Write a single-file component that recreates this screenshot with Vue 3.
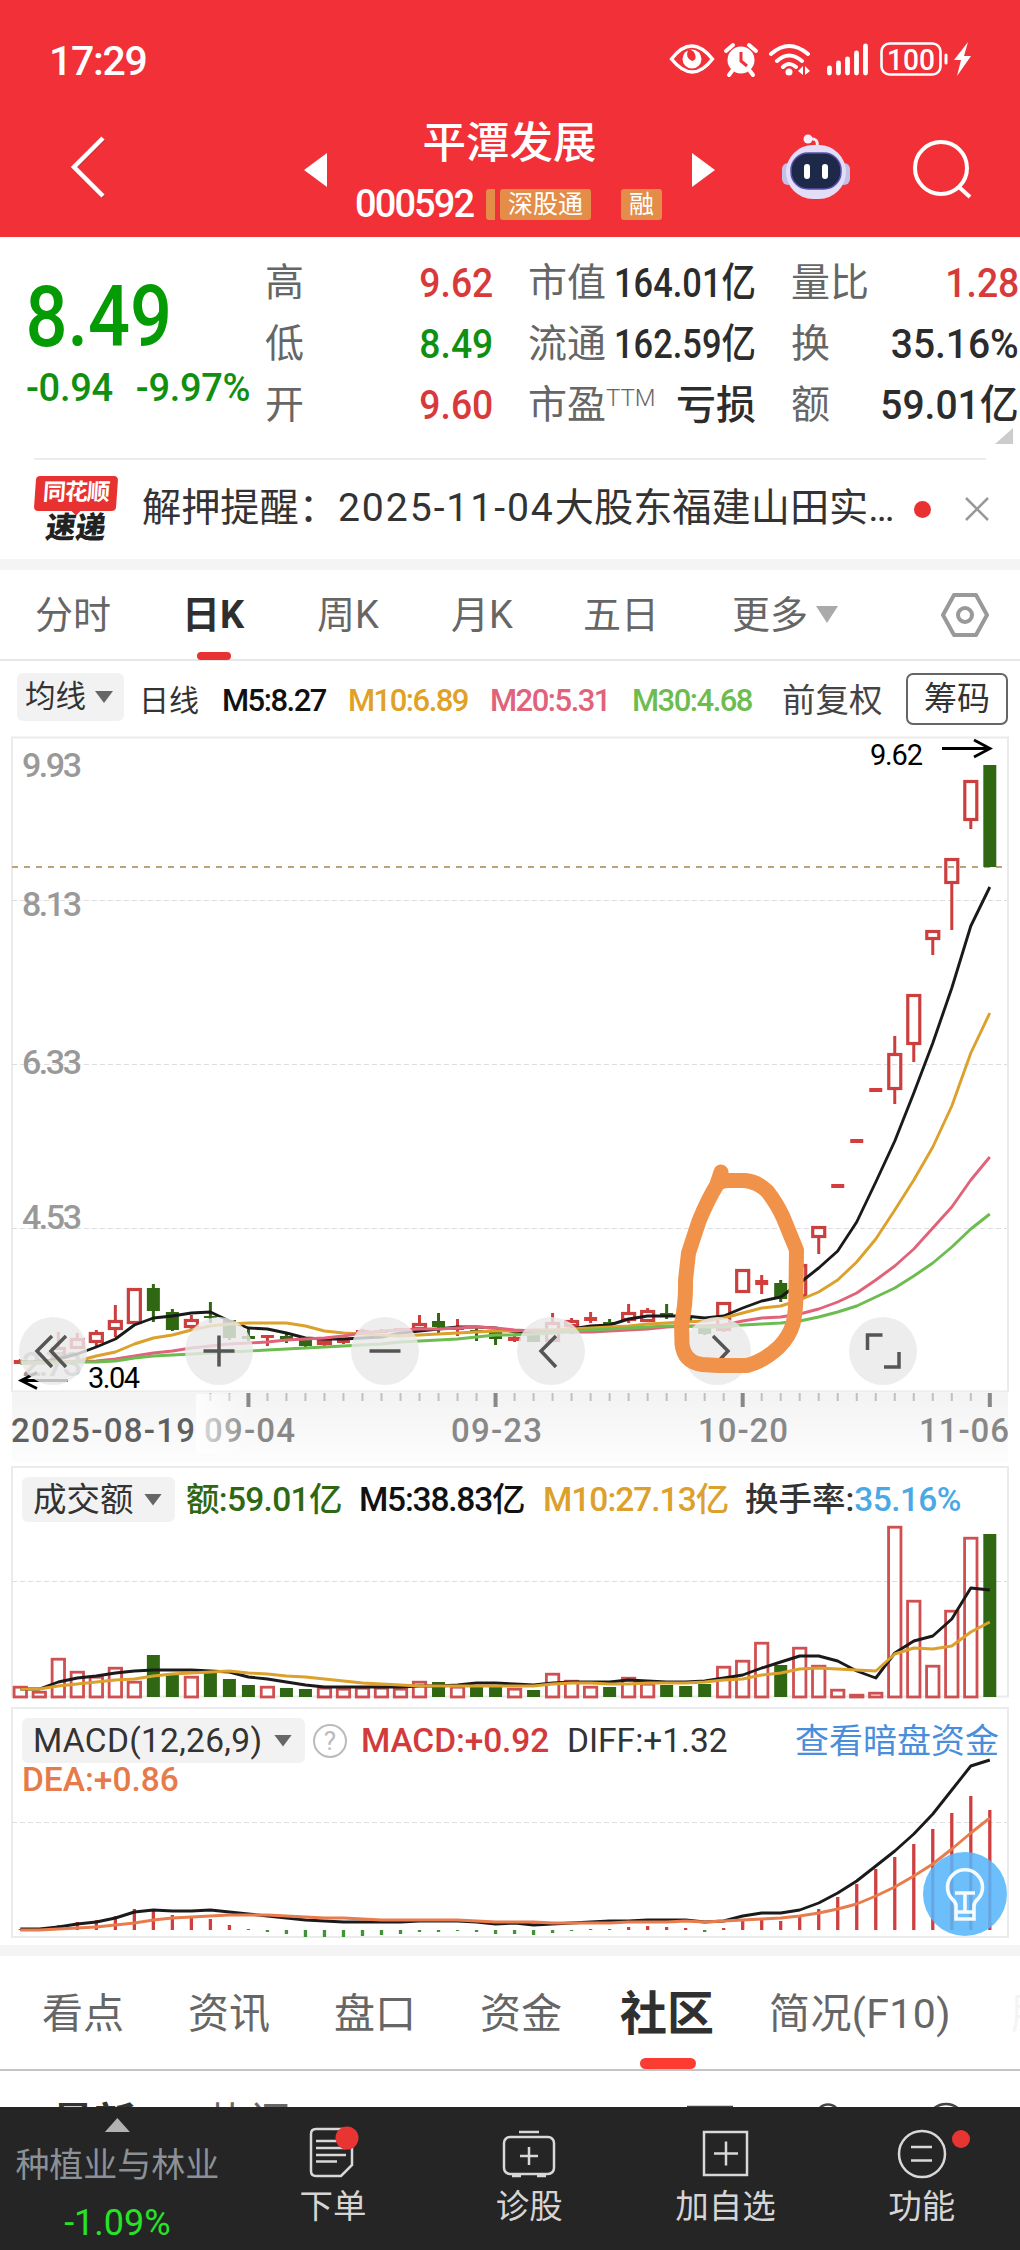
<template>
  <div class="page">
    <header class="top">
      <div class="status">
        <span class="clock">17:29</span>
        <svg class="status-icons" viewBox="664 36 312 46" width="312" height="46">
          <path d="M671.500 59q20-26 41 0q-20 26-41 0z" class="line" stroke-width="3.4" />
          <circle cx="692" cy="59" r="9.500" fill="#fff" />
          <path d="M688 50q-3 8 4 11q5-1 3-7q-1-3-4-4z" fill="#f13038" />
          <circle cx="741" cy="60" r="13.500" fill="#fff" />
          <path d="M741 52v9l6 5" class="cut" />
          <path d="M726 51l7-6M756 51l-7-6M732 71l-3 4M750 71l3 4" class="line" stroke-width="4" />
          <path d="M771 54q18-16 37 0M777 61q12-11 25 0M783 67q6-6 13 0" class="line" stroke-width="4" />
          <circle cx="789" cy="72" r="3.500" fill="#fff" />
          <path d="M803 66l-5 5l5 4zM805 66l5 5l-5 4z" fill="#fff" />
          <path d="M829.500 68v5M838.500 63v10M847.500 59v14M856.500 53v20M865.500 46v27" class="line" stroke-width="4.800" />
          <rect x="881.500" y="43.500" width="59" height="31" rx="8" class="line" stroke-width="2.600" />
          <path d="M946 55v8" class="line" stroke-width="3" />
          <text x="887" y="69.500" textLength="48" lengthAdjust="spacingAndGlyphs" class="battery">100</text>
          <path d="M968 42l-14 18h7l-4 16l14-20h-7z" fill="#fff" />
        </svg>
      </div>
      <div class="title-bar">
        <svg class="back" viewBox="0 0 40 66" width="40" height="66">
          <path d="M36 5L7 34L36 63" fill="none" stroke="#a8323a" stroke-width="4" opacity=".5" />
          <path d="M35 4L6 33L35 62" fill="none" stroke="#fff" stroke-width="4.500" />
        </svg>
        <svg class="arrow prev" viewBox="0 0 23 34" width="23" height="34"><path d="M23 0v34L0 17z" fill="#fff" /></svg>
        <div class="stock">
          <h1>平潭发展</h1>
          <div class="code-row">
            <span class="code">000592</span>
            <i class="sliver"></i>
            <span class="tag">深股通</span>
            <span class="tag tag-last">融</span>
          </div>
        </div>
        <svg class="arrow next" viewBox="0 0 23 34" width="23" height="34"><path d="M0 0v34l23-17z" fill="#fff" /></svg>
        <svg class="robot" viewBox="0 0 68 66" width="68" height="66">
          <path d="M35 13q2-10-9-8" fill="none" stroke="#f3e9f4" stroke-width="3" />
          <circle cx="26" cy="5" r="4.500" fill="#f6edf6" />
          <rect x="0" y="29" width="12" height="22" rx="6" fill="#c3c0ea" />
          <rect x="56" y="29" width="12" height="22" rx="6" fill="#c3c0ea" />
          <rect x="4" y="11" width="60" height="54" rx="27" fill="#e2def7" />
          <rect x="9" y="19" width="50" height="36" rx="17" fill="#1e2949" stroke="#5b4fb0" stroke-width="1.500" />
          <path d="M25 33v9M43 33v9" stroke="#fff" stroke-width="6" stroke-linecap="round" />
        </svg>
        <svg class="search" viewBox="0 0 60 62" width="60" height="62">
          <circle cx="28" cy="29" r="26" fill="none" stroke="#fff" stroke-width="4" />
          <path d="M46 48l11 10" stroke="#fff" stroke-width="4" />
        </svg>
      </div>
    </header>

    <section class="quote">
      <div class="price">
        <div class="last">8.49</div>
        <div class="change"><span>-0.94</span><span>-9.97%</span></div>
      </div>
      <div v-for="(col, c) in quotes" :key="c" class="col">
        <div v-for="q in col" :key="q.label" class="pair">
          <span class="label">{{ q.label }}<sup v-if="q.sup">{{ q.sup }}</sup></span>
          <span class="value" :class="q.tone">{{ q.value }}</span>
        </div>
      </div>
      <i class="corner"></i>
    </section>

    <section class="news">
      <div class="news-logo">
        <b class="logo-top">同花顺</b>
        <i class="logo-tip"></i>
        <b class="logo-bottom">速递</b>
      </div>
      <p class="news-text">解押提醒：<span>2025-11-04</span>大股东福建山田实…</p>
      <i class="dot"></i>
      <svg class="close" viewBox="0 0 24 24" width="24" height="24"><path d="M1 1l22 22M23 1L1 23" stroke="#999" stroke-width="2.500" /></svg>
    </section>

    <nav class="periods">
      <span v-for="p in periods" :key="p" class="period" :class="{ on: p === '日K' }">{{ p }}</span>
      <i class="caret caret-light"></i>
      <svg class="hex" viewBox="0 0 48 46" width="48" height="46">
        <path d="M13 3h22l11 20l-11 20h-22l-11-20z" fill="none" stroke="#999" stroke-width="4" stroke-linejoin="round" />
        <circle cx="24" cy="23" r="7" fill="none" stroke="#999" stroke-width="4" />
      </svg>
    </nav>

    <section class="averages">
      <span class="pill">均线<i class="caret"></i></span>
      <span class="kind">日线</span>
      <span v-for="m in averages" :key="m.text" class="avg" :class="m.tone">{{ m.text }}</span>
      <span class="adjust">前复权</span>
      <span class="chips">筹码</span>
    </section>

    <svg class="kline" viewBox="0 736 1020 726" width="1020" height="726">
      <defs>
        <linearGradient id="axisShade" x1="0" y1="0" x2="0" y2="1">
          <stop offset="0" stop-color="#f3f3f3" />
          <stop offset="1" stop-color="#fdfdfd" />
        </linearGradient>
        <linearGradient id="leftFade" x1="0" y1="0" x2="1" y2="0">
          <stop offset="0" stop-color="#fff" stop-opacity=".8" />
          <stop offset="1" stop-color="#fff" stop-opacity="0" />
        </linearGradient>
      </defs>
      <rect x="12" y="1393" width="996" height="69" fill="url(#axisShade)" />
      <rect x="12" y="737.500" width="996" height="654" fill="#fff" stroke="#ebebeb" stroke-width="2" />
      <path d="M12 900.500H1007M12 1064.500H1007M12 1228.500H1007" class="grid" />
      <text v-for="s in scale" :key="s.text" x="22" :y="s.y" textLength="60" class="scale">{{ s.text }}</text>
      <path d="M12 867H1007" stroke="#bba37a" stroke-width="2" stroke-dasharray="6 6" />

      <g v-for="(k, i) in candles" :key="i">
        <path :d="wick(k, i)" :class="k[0]" class="wick" />
        <rect v-if="k[0] === 'up' && k[3] - k[2] > 5" :x="x(i) - 6" :y="k[2] + 1.5" width="12" :height="k[3] - k[2] - 3" class="hollow" />
        <rect v-else :x="x(i) - 6.5" :y="k[2]" width="13" :height="k[3] - k[2]" :class="k[0]" />
      </g>
      <polyline :points="line(ma5)" class="ma black" />
      <polyline :points="line(ma10)" class="ma amber" />
      <polyline :points="line(ma20)" class="ma pink" />
      <polyline :points="line(ma30)" class="ma green" />

      <text x="870" y="765" textLength="53" class="mark">9.62</text>
      <path d="M942 748.500H989M974 740l16 8.500l-16 8.500" class="pointer" />
      <text x="88" y="1388" textLength="52" class="mark">3.04</text>
      <path d="M68 1380.500H21M37 1372.500l-16 8l16 8" class="pointer" />

      <circle v-for="n in 6" :key="n" :cx="n * 166 - 113" cy="1351" r="34" fill="#e9e9e9" opacity=".82" />
      <g fill="none" stroke="#555" stroke-width="3.500">
        <path d="M52 1336l-15 15l15 16M66 1336l-15 15l15 16" />
        <path d="M203.500 1351h31M219 1335.500v31" />
        <path d="M369.500 1351h31" />
        <path d="M556 1336l-15 15l15 16" />
        <path d="M713 1336l15 15l-15 16" />
        <path d="M867.500 1350v-15h15M899 1352v15h-15" />
      </g>
      <path
        d="M721 1172L717 1184Q722 1180.500 728 1180.500H745Q758 1182 767 1191Q776 1202 783 1217L796.500 1250L796 1290Q796 1312 793 1324Q789 1337 779 1347Q764 1361 747 1365.500H718L702 1364.500Q684 1362 682 1344L681.500 1323Q686 1305 685.500 1280L688.500 1253L699 1221Q708 1199 718 1183"
        fill="none" stroke="#f1924a" stroke-width="15" stroke-linecap="round" stroke-linejoin="round"
      />

      <path v-for="i in 42" :key="'t' + i" :d="tick(i + 9)" :class="{ major: isMajor(i + 9) }" class="tick" />
      <text x="204" y="1442" textLength="91" class="date">09-04</text>
      <text x="451" y="1442" textLength="91" class="date">09-23</text>
      <text x="698" y="1442" textLength="90" class="date">10-20</text>
      <text x="919" y="1442" textLength="90" class="date">11-06</text>
      <rect x="196" y="1394" width="52" height="60" fill="url(#leftFade)" />
      <text x="11" y="1442" textLength="184" class="date first">2025-08-19</text>
    </svg>

    <section class="panel volume">
      <svg class="plot" viewBox="0 1462 1020 240" width="1020" height="240">
        <rect x="12" y="1467" width="996" height="229.500" class="frame" />
        <path d="M12 1581.500H1007" class="grid" />
        <g v-for="(v, i) in volumes" :key="i">
          <rect v-if="rising(v)" :x="x(i) - 6.2" :y="Math.abs(v) + 1.2" width="12.4" :height="Math.max(1695.8 - v, 1)" class="hollow thin" />
          <rect v-else :x="x(i) - 6.5" :y="-v" width="13" :height="1697 + v" class="down" />
        </g>
        <polyline :points="line(vol5)" class="ma black" />
        <polyline :points="line(vol10)" class="ma amber" />
      </svg>
      <div class="legend">
        <span class="pill">成交额<i class="caret"></i></span>
        <span class="v1">额:59.01亿</span>
        <span class="v2">M5:38.83亿</span>
        <span class="v3">M10:27.13亿</span>
        <span class="v4">换手率:<em>35.16%</em></span>
      </div>
    </section>

    <section class="panel macd">
      <svg class="plot" viewBox="0 1702 1020 243" width="1020" height="243">
        <rect x="12" y="1708" width="996" height="229" class="frame" />
        <path d="M12 1822.500H1007" class="grid" />
        <path v-for="(h, i) in bars" :key="i" :d="`M${x(i)} 1930v${-h}`" :stroke="h > 0 ? '#cf3f3f' : '#429237'" stroke-width="3.300" />
        <polyline :points="line(diff)" class="ma black" />
        <polyline :points="line(dea)" class="ma coral" />
      </svg>
      <div class="legend">
        <span class="pill">MACD(12,26,9)<i class="caret"></i></span>
        <span class="help">?</span>
        <span class="m1">MACD:+0.92</span>
        <span class="m2">DIFF:+1.32</span>
        <span class="m3">查看暗盘资金</span>
      </div>
      <div class="dea">DEA:+0.86</div>
      <svg class="bulb" viewBox="0 0 84 84" width="84" height="84">
        <circle cx="42" cy="42" r="42" fill="#58b6fb" opacity=".88" />
        <path d="M33 54q0-4-4-7a17.500 17.500 0 1 1 26 0q-4 3-4 7v13h-18zM33 60h18M32 41h20M42 41v19" fill="none" stroke="#f4fbff" stroke-width="3.600" />
      </svg>
    </section>

    <nav class="tabs">
      <span v-for="t in tabs" :key="t" :class="{ on: t === '社区' }">{{ t }}</span>
    </nav>
    <section class="feed">
      <b>最新</b><span>热门</span>
      <svg viewBox="680 2070 300 37" width="300" height="37">
        <g fill="none" stroke="#444" stroke-width="2.500">
          <path d="M687 2106h46" />
          <circle cx="828" cy="2115" r="11.500" />
          <circle cx="946" cy="2122" r="19" />
        </g>
      </svg>
    </section>

    <footer class="dock">
      <div class="sector">
        <i class="up-caret"></i>
        <span class="sector-name">种植业与林业</span>
        <span class="sector-change">-1.09%</span>
      </div>
      <div class="action">
        <svg viewBox="0 0 60 60" width="60" height="60">
          <path d="M13 5h32q4 0 4 4v32l-11 11h-25q-5 0-5-5v-37q0-5 5-5z" />
          <path d="M13 17h26M13 24h30M13 31h30M13 37.500h21" />
          <circle cx="44" cy="14" r="11.500" class="badge" />
        </svg>
        <span>下单</span>
      </div>
      <div class="action">
        <svg viewBox="0 0 60 60" width="60" height="60">
          <rect x="5" y="13" width="50" height="37" rx="6" />
          <path d="M20 8h20M21 32h18M30 23v18M13 52h9M38 52h9" />
        </svg>
        <span>诊股</span>
      </div>
      <div class="action">
        <svg viewBox="0 0 60 60" width="60" height="60">
          <rect x="8" y="8" width="43" height="43" />
          <path d="M18 29.500h24M30 17.500v24" />
        </svg>
        <span>加自选</span>
      </div>
      <div class="action">
        <svg viewBox="0 0 60 60" width="60" height="60">
          <circle cx="30" cy="30" r="23" />
          <path d="M19 23h21M19 36.500h21" />
          <circle cx="69" cy="15" r="9" class="badge" />
        </svg>
        <span>功能</span>
      </div>
    </footer>
  </div>
</template>

<script setup>
const quotes = [
  [
    { label: '高', value: '9.62', tone: 'red' },
    { label: '低', value: '8.49', tone: 'grn' },
    { label: '开', value: '9.60', tone: 'red' }
  ],
  [
    { label: '市值', value: '164.01亿', tone: 'tight' },
    { label: '流通', value: '162.59亿', tone: 'tight' },
    { label: '市盈', sup: 'TTM', value: '亏损', tone: 'strong' }
  ],
  [
    { label: '量比', value: '1.28', tone: 'red' },
    { label: '换', value: '35.16%', tone: 'wide' },
    { label: '额', value: '59.01亿', tone: 'wide' }
  ]
]
const periods = ['分时', '日K', '周K', '月K', '五日', '更多']
const averages = [
  { text: 'M5:8.27', tone: 'a5' },
  { text: 'M10:6.89', tone: 'a10' },
  { text: 'M20:5.31', tone: 'a20' },
  { text: 'M30:4.68', tone: 'a30' }
]
const tabs = ['看点', '资讯', '盘口', '资金', '社区', '简况(F10)', '股']
const scale = [
  { text: '9.93', y: 777 },
  { text: '8.13', y: 916 },
  { text: '6.33', y: 1074 },
  { text: '4.53', y: 1229 },
  { text: '2.73', y: 1376 }
]

// direction, high, body top, body bottom, low
const candles = [
  ['up', 1359, 1360, 1364, 1364], ['up', 1359, 1360, 1362, 1363], ['up', 1332, 1347, 1359, 1359],
  ['up', 1333, 1338, 1349, 1349], ['up', 1330, 1332, 1343, 1346], ['up', 1305, 1320, 1330, 1337],
  ['up', 1288, 1288, 1324, 1324], ['down', 1284, 1288, 1311, 1322], ['down', 1309, 1312, 1330, 1331],
  ['up', 1315, 1319, 1328, 1330], ['down', 1302, 1316, 1318, 1323], ['down', 1320, 1320, 1338, 1340],
  ['down', 1329, 1336, 1339, 1341], ['up', 1335, 1335, 1338, 1346], ['down', 1332, 1336, 1339, 1343],
  ['down', 1339, 1339, 1346, 1347], ['up', 1339, 1339, 1345, 1346], ['up', 1338, 1338, 1343, 1344],
  ['up', 1329, 1330, 1334, 1334], ['up', 1329, 1330, 1333, 1333], ['up', 1328, 1328, 1331, 1331],
  ['up', 1315, 1323, 1330, 1330], ['down', 1313, 1321, 1327, 1333], ['up', 1319, 1327, 1330, 1336],
  ['down', 1328, 1330, 1332, 1341], ['down', 1332, 1332, 1339, 1345], ['up', 1336, 1337, 1341, 1342],
  ['down', 1335, 1335, 1342, 1342], ['up', 1313, 1322, 1342, 1342], ['up', 1318, 1320, 1327, 1334],
  ['up', 1312, 1317, 1321, 1323], ['down', 1319, 1322, 1324, 1327], ['up', 1304, 1312, 1321, 1323],
  ['up', 1308, 1310, 1322, 1322], ['down', 1304, 1313, 1315, 1319], ['down', 1316, 1318, 1322, 1324],
  ['down', 1326, 1327, 1334, 1335], ['up', 1302, 1302, 1331, 1332], ['up', 1269, 1269, 1293, 1293],
  ['up', 1275, 1280, 1285, 1294], ['down', 1280, 1283, 1299, 1302], ['up', 1264, 1264, 1297, 1297],
  ['up', 1226, 1226, 1238, 1254], ['up', 1184, 1184, 1188, 1188], ['up', 1139, 1139, 1143, 1143],
  ['up', 1088, 1088, 1092, 1092], ['up', 1036, 1053, 1090, 1104], ['up', 994, 994, 1045, 1062],
  ['up', 930, 930, 940, 955], ['up', 858, 858, 884, 930], ['up', 780, 780, 821, 829],
  ['down', 765, 765, 867, 867]
]

const ma5 = [
  1362, 1362, 1359, 1354, 1347, 1339, 1325, 1318, 1316, 1313, 1312, 1321, 1328, 1329, 1333, 1338, 1339, 1339,
  1338, 1337, 1333, 1331, 1329, 1327, 1327, 1328, 1332, 1333, 1331, 1329, 1326, 1325, 1319, 1316, 1316, 1316,
  1318, 1316, 1308, 1301, 1297, 1283, 1268, 1251, 1222, 1182, 1141, 1093, 1043, 988, 926, 887
]
const ma10 = [
  1363, 1362, 1362, 1361, 1356, 1352, 1344, 1338, 1335, 1330, 1326, 1324, 1323, 1323, 1323, 1326, 1331, 1333,
  1334, 1335, 1336, 1335, 1334, 1333, 1332, 1331, 1331, 1330, 1330, 1329, 1328, 1327, 1326, 1324, 1323, 1322,
  1321, 1318, 1313, 1308, 1306, 1300, 1292, 1280, 1262, 1239, 1210, 1180, 1147, 1106, 1053, 1013
]
const ma20 = [
  1363, 1363, 1362, 1362, 1361, 1359, 1356, 1353, 1351, 1348, 1346, 1344, 1343, 1342, 1340, 1339, 1338, 1336,
  1333, 1331, 1330, 1329, 1329, 1328, 1327, 1328, 1330, 1331, 1332, 1332, 1332, 1331, 1330, 1329, 1327, 1326,
  1326, 1325, 1321, 1318, 1317, 1314, 1309, 1302, 1293, 1280, 1266, 1249, 1228, 1207, 1180, 1157
]
const ma30 = [
  1363, 1363, 1363, 1362, 1362, 1361, 1358, 1356, 1355, 1354, 1353, 1352, 1351, 1350, 1349, 1348, 1347, 1346,
  1345, 1344, 1342, 1341, 1340, 1339, 1337, 1335, 1335, 1334, 1333, 1331, 1330, 1329, 1328, 1327, 1326, 1326,
  1327, 1327, 1325, 1324, 1323, 1321, 1317, 1312, 1306, 1297, 1288, 1276, 1263, 1247, 1229, 1214
]

// bar tops, negative on falling days
const volumes = [
  1686, 1691, 1658, 1671, 1676, 1667, 1681, -1655, -1675, 1676, -1673, -1679, -1685, 1686, -1688, -1689, 1687,
  1688, 1687, 1687, 1688, 1681, -1682, 1686, -1687, -1687, 1688, -1690, 1673, 1680, 1686, -1687, 1677, 1683,
  -1685, -1686, -1684, 1666, 1660, 1642, -1665, 1647, 1665, 1689, 1694, 1692, 1526, 1600, 1665, 1610, 1537, -1534
]
const vol5 = [
  1689, 1689, 1682, 1678, 1676, 1673, 1671, 1670, 1670, 1670, 1671, 1672, 1677, 1679, 1682, 1685, 1687, 1687,
  1687, 1687, 1687, 1686, 1686, 1685, 1683, 1683, 1684, 1685, 1683, 1682, 1682, 1682, 1680, 1681, 1682, 1682,
  1681, 1678, 1675, 1668, 1662, 1656, 1656, 1661, 1671, 1678, 1653, 1641, 1636, 1619, 1588, 1590
]
const vol10 = [
  1689, 1689, 1686, 1684, 1682, 1680, 1679, 1676, 1674, 1673, 1672, 1671, 1673, 1674, 1676, 1677, 1679, 1681,
  1683, 1684, 1685, 1686, 1686, 1686, 1686, 1686, 1686, 1686, 1684, 1683, 1683, 1684, 1684, 1683, 1683, 1683,
  1682, 1680, 1679, 1675, 1673, 1669, 1668, 1669, 1670, 1671, 1654, 1648, 1649, 1646, 1632, 1622
]

const bars = [
  1, 2, 5, 8, 10, 14, 21, 19, 15, 12, 11, 5, 1, -2, -4, -7, -7, -7, -6, -5, -4, -2, -2, -1, -2, -4, -4, -5, -3,
  -1, 1, 1, 3, 4, 3, 2, -2, 2, 9, 10, 9, 13, 21, 33, 46, 61, 73, 86, 101, 117, 134, 120
]
const diff = [
  1929, 1929, 1927, 1924, 1922, 1918, 1912, 1910, 1911, 1911, 1910, 1912, 1914, 1916, 1918, 1920, 1921, 1922,
  1922, 1922, 1922, 1921, 1921, 1921, 1922, 1924, 1923, 1925, 1924, 1923, 1922, 1921, 1921, 1920, 1920, 1920,
  1922, 1921, 1916, 1913, 1913, 1910, 1903, 1893, 1881, 1866, 1851, 1834, 1814, 1790, 1766, 1760
]
const dea = [
  1930, 1930, 1929, 1928, 1927, 1925, 1923, 1920, 1918, 1917, 1916, 1915, 1915, 1915, 1916, 1917, 1918, 1918,
  1919, 1920, 1920, 1920, 1920, 1920, 1921, 1922, 1922, 1922, 1923, 1923, 1923, 1923, 1922, 1922, 1922, 1921,
  1922, 1921, 1920, 1919, 1918, 1916, 1913, 1909, 1904, 1896, 1887, 1876, 1864, 1849, 1833, 1818
]

const x = (i) => 20.3 + i * 19.01
const line = (ys) => ys.map((y, i) => `${x(i).toFixed(1)},${y}`).join(' ')
const wick = (k, i) => `M${x(i)} ${k[1]}V${k[2]}M${x(i)} ${k[3]}V${k[4]}`
const rising = (v) => v > 0
const isMajor = (i) => i % 13 === 12
const tick = (i) => `M${x(i)} 1393v${isMajor(i) ? 14 : 8}`
</script>

<style>
body {
  margin: 0;
  background: #fff;
}
</style>

<style scoped>
.page {
  width: 1020px;
  height: 2250px;
  overflow: hidden;
  display: flex;
  flex-direction: column;
  background: #fff;
  color: #333;
  font-family: Roboto, "Noto Sans CJK SC", sans-serif;
  line-height: 1;
}

.page > * {
  flex: none;
  box-sizing: border-box;
}

i,
em {
  font-style: normal;
}

/* header */
.top {
  height: 237px;
  background: #f13038;
  color: #fff;
}

.status {
  height: 82px;
  padding: 36px 44px 0 49px;
  box-sizing: border-box;
  display: flex;
  justify-content: space-between;
}

.clock {
  font-size: 41px;
  font-weight: 500;
  line-height: 50px;
  letter-spacing: -1.3px;
}

.line {
  fill: none;
  stroke: #fff;
  stroke-linecap: round;
}

.cut {
  fill: none;
  stroke: #f13038;
  stroke-width: 3;
}

.battery {
  font-size: 30px;
  font-weight: 500;
  fill: #fff;
}

.title-bar {
  display: flex;
  height: 155px;
}

.back {
  margin: 52px 0 0 68px;
}

.arrow {
  margin-top: 71px;
}

.prev {
  margin-left: 196px;
}

.stock {
  width: 365px;
  padding-top: 39px;
}

h1 {
  margin: 0;
  font-size: 43.500px;
  line-height: 46px;
  font-weight: 500;
  text-align: center;
}

.code-row {
  display: flex;
  align-items: center;
  margin: 18px 0 0 28px;
}

.code {
  width: 131px;
  font-size: 38px;
  font-weight: 500;
  letter-spacing: -1.900px;
}

.sliver {
  width: 9px;
  height: 31px;
  border-radius: 3px 0 0 3px;
  background: #e38d48;
}

.tag {
  margin-left: 5px;
  padding: 0 8px;
  border-radius: 3px;
  background: #e38d48;
  font-size: 25px;
  line-height: 31px;
}

.tag-last {
  margin-left: 30px;
}

.robot {
  margin: 52px 0 0 67px;
}

.search {
  margin: 57px 0 0 63px;
}

/* quote */
.quote {
  position: relative;
  height: 222px;
  margin: 0 0 0 26px;
  display: flex;
}

.price {
  width: 239px;
  color: #049b04;
}

.last {
  margin-top: 38px;
  font-size: 85px;
  font-weight: 500;
  transform: scaleX(.87);
  transform-origin: -4px 0;
}

.change {
  display: flex;
  gap: 23px;
  margin-top: 9px;
  font-size: 38px;
  font-weight: 500;
  letter-spacing: -.3px;
  color: #118f11;
  white-space: nowrap;
}

.col {
  width: 228px;
  padding-top: 16px;
}

.col + .col {
  margin-left: 35px;
}

.pair {
  height: 61px;
  display: flex;
  align-items: center;
  justify-content: space-between;
  white-space: nowrap;
}

.label {
  font-size: 39px;
  color: #666;
}

sup {
  font-size: 24px;
  font-weight: 300;
  vertical-align: 12px;
}

.value {
  font-size: 41px;
  font-weight: 500;
  color: #2c2c2c;
  transform: scaleX(.91);
  transform-origin: right;
}

.value.tight {
  margin-left: -30px;
  transform: scaleX(.84);
}

.value.wide {
  transform: scaleX(.95);
}

.value.strong {
  font-size: 40px;
  transform: none;
}

.value.red {
  color: #d83a3a;
}

.value.grn {
  color: #118f11;
}

.corner {
  position: absolute;
  right: 7px;
  bottom: 15px;
  border-left: 18px solid transparent;
  border-bottom: 16px solid #ccc;
}

/* news */
.news {
  height: 111px;
  border-bottom: 11px solid #f4f4f4;
  display: flex;
  align-items: center;
  position: relative;
}

.news::before {
  content: "";
  position: absolute;
  inset: -1px 34px auto;
  height: 2px;
  background: #ededed;
}

.news-logo {
  width: 82px;
  margin: 0 25px 0 35px;
  text-align: center;
}

.logo-top {
  display: block;
  height: 35px;
  border-radius: 4px;
  background: #e83232;
  color: #fff;
  font-size: 23px;
  line-height: 33px;
  letter-spacing: -1px;
  transform: skewX(-4deg);
}

.logo-tip {
  display: block;
  width: 12px;
  height: 6px;
  margin: -1px auto -3px;
  background: #e83232;
  clip-path: polygon(0 0, 100% 0, 50% 100%);
}

.logo-bottom {
  display: block;
  font-size: 30px;
  font-weight: 900;
  transform: skewX(-8deg);
  color: #222;
}

.news-text {
  width: 763px;
  margin: 0 9px 0 0;
  font-size: 39.200px;
  color: #333;
  white-space: nowrap;
}

.news-text span {
  letter-spacing: 1.900px;
}

.dot {
  width: 17px;
  height: 17px;
  margin-right: 34px;
  border-radius: 50%;
  background: #e83232;
}

/* period tabs */
.periods {
  height: 91px;
  padding-left: 35px;
  border-bottom: 2px solid #e6e6e6;
  display: flex;
  align-items: center;
  font-size: 38px;
  color: #666;
}

.period {
  position: relative;
  width: 147px;
  line-height: 92px;
}

.period:nth-child(2) {
  width: 135px;
}

.period:nth-child(3) {
  width: 134px;
}

.period:nth-child(4) {
  width: 132px;
}

.period:nth-child(5) {
  width: 149px;
}

.period:nth-child(6) {
  width: 84px;
}

.period.on {
  color: #2f2f2f;
  font-weight: 700;
}

.period.on::after {
  content: "";
  position: absolute;
  left: 15px;
  bottom: 1px;
  width: 34px;
  height: 8px;
  border-radius: 4px;
  background: #e83232;
}

.caret {
  display: inline-block;
  width: 18px;
  height: 12px;
  background: #666;
  clip-path: polygon(0 0, 100% 0, 50% 100%);
}

.caret-light {
  width: 22px;
  height: 17px;
  background: #aaa;
}

.hex {
  margin-left: 103px;
}

/* averages */
.averages {
  height: 75px;
  padding: 12px 12px 0 17px;
  display: flex;
}

.pill {
  display: flex;
  align-items: center;
  justify-content: space-between;
  box-sizing: border-box;
  border-radius: 6px;
  background: #f2f2f2;
  white-space: nowrap;
}

.averages .pill {
  width: 107px;
  height: 48px;
  padding: 0 11px 0 8px;
  font-size: 30.500px;
}

.kind,
.avg,
.adjust {
  line-height: 56px;
  white-space: nowrap;
}

.kind {
  width: 83px;
  margin-left: 15px;
  font-size: 30px;
}

.avg {
  width: 126px;
  font-size: 31px;
  font-weight: 500;
  letter-spacing: -1.500px;
}

.a10,
.a20,
.a30 {
  width: 142px;
}

.a5 {
  color: #111;
}

.a10 {
  color: #dfa126;
}

.a20 {
  color: #e0637a;
}

.a30 {
  width: 150px;
  color: #6dbc50;
}

.adjust {
  width: 124px;
  font-size: 33.500px;
  color: #444;
}

.chips {
  width: 102px;
  height: 52px;
  box-sizing: border-box;
  border: 2px solid #666;
  border-radius: 7px;
  text-align: center;
  font-size: 33px;
  line-height: 48px;
}

/* charts */
.kline {
  display: block;
}

.grid {
  stroke: #ddd;
  stroke-width: 1.2;
  stroke-dasharray: 5 3;
}

.scale {
  font-size: 34px;
  font-weight: 500;
  fill: #999;
}

.up {
  fill: #d63c3c;
}

.down {
  fill: #2f6712;
}

.wick {
  stroke: #cf3c3c;
  stroke-width: 3;
}

.wick.down {
  stroke: #2f6712;
}

.hollow {
  fill: none;
  stroke: #cb3f3f;
  stroke-width: 3.200;
}

.thin {
  stroke: #cf5050;
  stroke-width: 2.800;
}

.ma {
  fill: none;
  stroke-width: 2.900;
  stroke-linejoin: round;
}

.black {
  stroke: #1a1a1a;
}

.amber {
  stroke: #dca02c;
}

.pink {
  stroke: #e0637a;
}

.green {
  stroke: #6dbc50;
}

.coral {
  stroke: #e87c4c;
}

.mark {
  font-size: 29px;
  fill: #000;
}

.pointer {
  fill: none;
  stroke: #000;
  stroke-width: 2.800;
}

.tick {
  stroke: #c0c0c0;
  stroke-width: 2;
}

.tick.major {
  stroke: #888;
  stroke-width: 4;
}

.date {
  font-size: 33px;
  font-weight: 500;
  fill: #888;
}

.date.first {
  fill: #606060;
}

.frame {
  fill: #fff;
  stroke: #ebebeb;
  stroke-width: 2;
}

.panel {
  position: relative;
}

.plot {
  position: absolute;
  top: 0;
  left: 0;
}

.volume {
  height: 240px;
  padding-top: 15px;
}

.legend {
  position: relative;
  display: flex;
  padding-left: 22px;
  font-size: 33.500px;
  line-height: 46px;
  white-space: nowrap;
}

.legend .pill {
  width: 153px;
  height: 45px;
  padding: 0 13px 0 11px;
}

.v1,
.v2,
.v3,
.v4,
.m1 {
  font-weight: 500;
}

.v1 {
  width: 173px;
  margin-left: 11px;
  color: #2f6712;
  letter-spacing: -.7px;
}

.v2 {
  width: 184px;
  color: #111;
  letter-spacing: -1.200px;
}

.v3 {
  width: 202px;
  color: #dca02c;
  letter-spacing: -1px;
}

.v4 em {
  color: #4aa9e4;
  letter-spacing: -.6px;
}

.macd {
  height: 254px;
  padding-top: 16px;
  border-bottom: 11px solid #f4f4f4;
}

.macd .pill {
  width: 283px;
  letter-spacing: .3px;
}

.help {
  width: 34px;
  height: 34px;
  margin: 6px 14px 0 8px;
  box-sizing: border-box;
  border: 2.500px solid #bbb;
  border-radius: 50%;
  color: #bbb;
  font-size: 26px;
  line-height: 30px;
  text-align: center;
}

.m1 {
  width: 206px;
  color: #d23b3b;
  letter-spacing: -.1px;
}

.m2 {
  width: 228px;
}

.m3 {
  color: #4a8edb;
  font-size: 34px;
}

.dea {
  position: relative;
  padding-left: 22px;
  font-size: 33.500px;
  font-weight: 500;
  line-height: 32px;
  color: #e67a4a;
}

.bulb {
  position: absolute;
  right: 13px;
  top: 150px;
}

/* bottom tabs */
.tabs {
  height: 115px;
  border-bottom: 2px solid #c4c4c4;
  padding-left: 42px;
  display: flex;
  font-size: 41px;
  line-height: 116px;
  color: #666;
  white-space: nowrap;
  overflow: hidden;
}

.tabs span {
  flex: none;
  width: 146px;
}

.tabs span:nth-child(4) {
  width: 140px;
}

.tabs .on {
  position: relative;
  font-size: 47px;
  font-weight: 700;
  color: #303030;
}

.tabs span:nth-child(5) {
  width: 149px;
}

.tabs .on::after {
  content: "";
  position: absolute;
  left: 20px;
  bottom: 0;
  width: 56px;
  height: 11px;
  border-radius: 6px;
  background: #fc3c33;
}

.tabs span:nth-child(6) {
  width: 242px;
  letter-spacing: .4px;
}

.tabs span:nth-child(7) {
  color: #f4f4f4;
}

.feed {
  height: 36px;
  padding: 32px 0 0 52px;
  overflow: hidden;
  display: flex;
  font-size: 42px;
}

.feed b {
  width: 155px;
}

.feed span {
  width: 90px;
  color: #666;
}

.feed svg {
  margin: -32px 0 0 383px;
}

/* dock */
.dock {
  height: 143px;
  background: #252525;
  display: flex;
}

.sector {
  width: 235px;
  display: flex;
  flex-direction: column;
  align-items: center;
}

.up-caret {
  width: 25px;
  height: 14px;
  margin-top: 11px;
  background: #b2b2b2;
  clip-path: polygon(50% 0, 100% 100%, 0 100%);
}

.sector-name {
  margin-top: 16px;
  font-size: 34px;
  color: #8b9196;
}

.sector-change {
  margin-top: 23px;
  font-size: 36px;
  color: #25e425;
}

.action {
  width: 196.500px;
  display: flex;
  flex-direction: column;
  align-items: center;
  font-size: 33.500px;
  color: #d8d4d4;
}

.action svg {
  margin-top: 17px;
  overflow: visible;
  fill: none;
  stroke: #d8d8d8;
  stroke-width: 2.500;
}

.action .badge {
  fill: #e93434;
  stroke: none;
}

.action span {
  margin-top: 6px;
}
</style>
